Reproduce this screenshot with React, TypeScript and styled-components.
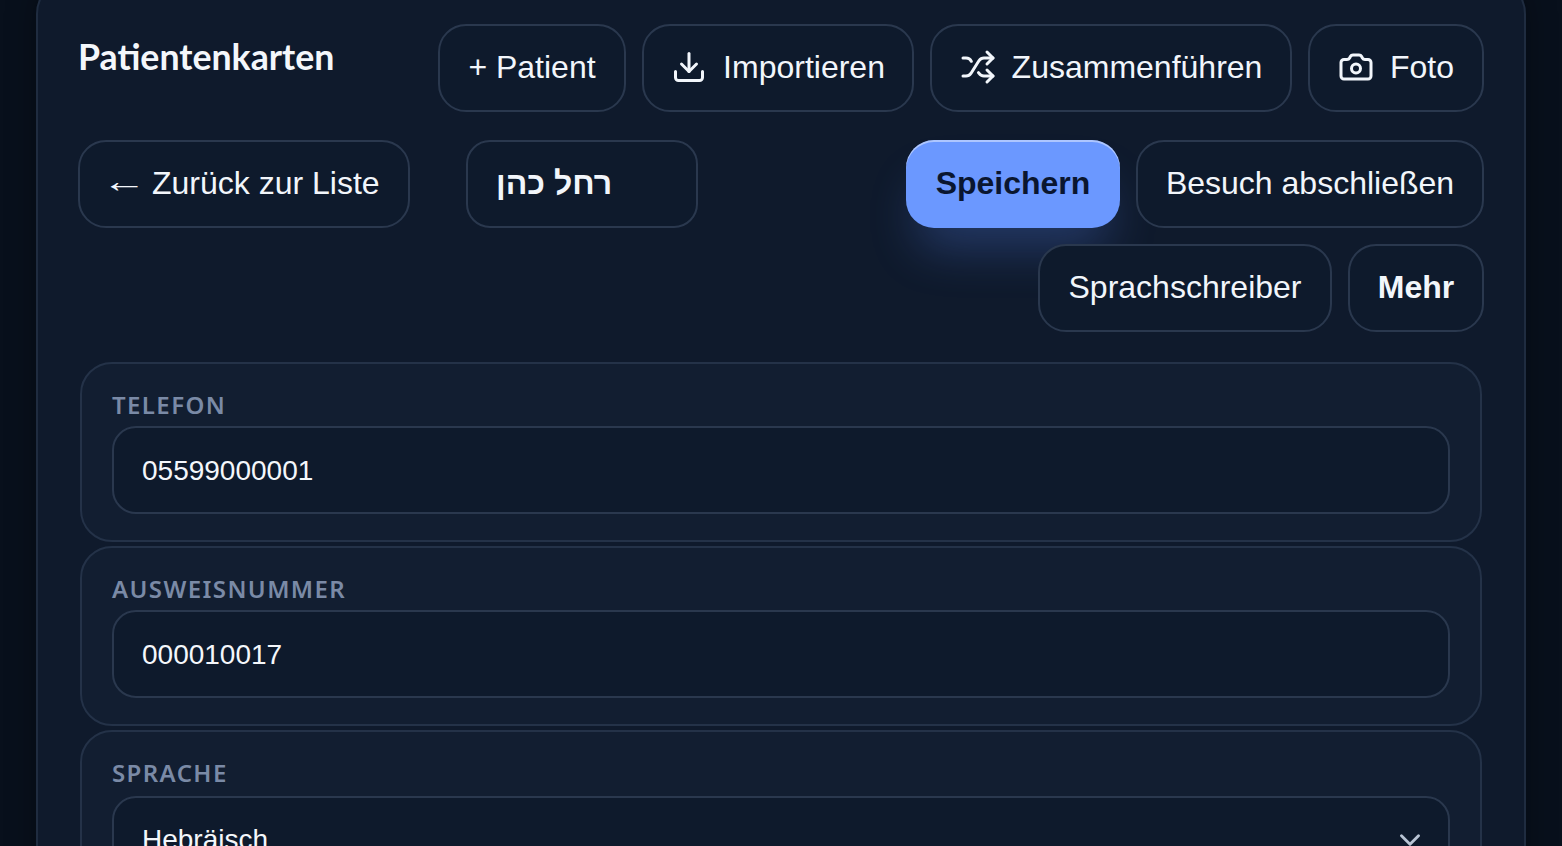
import styled, { createGlobalStyle } from "styled-components";
import { Camera, ChevronDown, Download, Shuffle } from "lucide-react";

const GlobalStyle = createGlobalStyle`
  html, body {
    margin: 0;
    height: 846px;
    overflow: hidden;
    background: #08101c;
  }
  * {
    box-sizing: border-box;
  }
`;

const Page = styled.div`
  height: 846px;
  overflow: hidden;
  padding: 0 36px;
  background: #08101c;
  font-family: "Liberation Sans", Arial, sans-serif;
`;

const Panel = styled.div`
  margin-top: -22px;
  min-height: 1200px;
  padding: 44px 40px 40px;
  background: #0f1a2c;
  border: 2px solid #1f2c40;
  border-radius: 36px;
  box-shadow: 0 0 30px rgba(0, 0, 0, 0.35);
`;

const TopRow = styled.div`
  display: flex;
  justify-content: space-between;
  align-items: flex-start;
`;

const Title = styled.h2`
  margin: 11px 0 0 0;
  font-family: Lato, sans-serif;
  font-size: 35.7px;
  line-height: 44px;
  font-weight: 700;
  color: #f4f7fb;
`;

const Actions = styled.div`
  display: flex;
  gap: 16px;
`;

const Button = styled.button<{ $bold?: boolean; $width?: number }>`
  display: inline-flex;
  align-items: center;
  justify-content: center;
  gap: 16px;
  width: ${(p) => (p.$width ? `${p.$width}px` : "auto")};
  height: 88px;
  padding: 0 28px 2px;
  background: #0e1a2c;
  border: 2px solid #2a384e;
  border-radius: 28px;
  font-family: "Liberation Sans", Arial, sans-serif;
  font-size: 32px;
  font-weight: ${(p) => (p.$bold ? 700 : 400)};
  color: #f2f6fb;
  white-space: nowrap;

  svg {
    flex: none;
  }
`;

const PrimaryButton = styled(Button)`
  background: #6b98ff;
  border: none;
  color: #0a1630;
  font-weight: 700;
  box-shadow: inset 0 2px 0 rgba(255, 255, 255, 0.45),
    0 32px 48px -12px rgba(86, 130, 240, 0.3);
`;

const BackButton = styled(Button)`
  justify-content: flex-start;
  gap: 12px;
`;

const BackArrow = styled.span`
  display: inline-block;
  width: 32px;
  transform: translateY(-2px) scaleX(1.4);
`;

const SecondRow = styled.div`
  display: flex;
  justify-content: space-between;
  align-items: flex-start;
  margin-top: 28px;
`;

const LeftGroup = styled.div`
  display: flex;
  gap: 56px;
`;

const NameBox = styled.div`
  display: flex;
  align-items: center;
  width: 232px;
  height: 88px;
  padding: 0 28px 2px;
  background: #0e1a2c;
  border: 2px solid #2a384e;
  border-radius: 24px;
  font-size: 32px;
  font-weight: 700;
  color: #f2f6fb;
`;

const RightGroup = styled.div`
  display: flex;
  flex-wrap: wrap;
  justify-content: flex-end;
  gap: 16px;
  width: 600px;
`;

const Sections = styled.div`
  display: flex;
  flex-direction: column;
  gap: 4px;
  margin: 30px 2px 0;
`;

const Section = styled.section`
  padding: 24px 30px 26px;
  background: #121e31;
  border: 2px solid #243248;
  border-radius: 32px;
`;

const Label = styled.label<{ $gap?: number }>`
  display: block;
  margin-bottom: ${(p) => p.$gap ?? 4}px;
  font-family: "Noto Sans", sans-serif;
  font-size: 24px;
  line-height: 34px;
  font-weight: 600;
  letter-spacing: 1.4px;
  text-transform: uppercase;
  color: #7a8aa6;
`;

const Input = styled.input`
  display: block;
  width: 100%;
  height: 88px;
  padding: 2px 28px 0;
  background: #0e1a2c;
  border: 2px solid #2a384e;
  border-radius: 24px;
  outline: none;
  font-family: "Liberation Sans", Arial, sans-serif;
  font-size: 28px;
  color: #f4f7fb;
`;

const Select = styled.div`
  display: flex;
  align-items: center;
  justify-content: space-between;
  height: 88px;
  padding: 0 21px 0 28px;
  background: #0e1a2c;
  border: 2px solid #2a384e;
  border-radius: 24px;
  font-size: 28px;
  color: #f4f7fb;

  svg {
    color: #b8c4d4;
  }
`;

export default function App() {
  return (
    <>
      <GlobalStyle />
      <Page>
        <Panel>
          <TopRow>
            <Title>Patientenkarten</Title>
            <Actions>
              <Button $width={188}>+ Patient</Button>
              <Button $width={272}>
                <Download size={36} />
                Importieren
              </Button>
              <Button $width={362}>
                <Shuffle size={36} />
                Zusammenführen
              </Button>
              <Button $width={176}>
                <Camera size={36} />
                Foto
              </Button>
            </Actions>
          </TopRow>
          <SecondRow>
            <LeftGroup>
              <BackButton $width={332}>
                <BackArrow>←</BackArrow>
                Zurück zur Liste
              </BackButton>
              <NameBox>רחל כהן</NameBox>
            </LeftGroup>
            <RightGroup>
              <PrimaryButton $width={214}>Speichern</PrimaryButton>
              <Button $width={348}>Besuch abschließen</Button>
              <Button $width={294}>Sprachschreiber</Button>
              <Button $bold $width={136}>Mehr</Button>
            </RightGroup>
          </SecondRow>
          <Sections>
            <Section>
              <Label>Telefon</Label>
              <Input readOnly value="05599000001" />
            </Section>
            <Section>
              <Label>Ausweisnummer</Label>
              <Input readOnly value="000010017" />
            </Section>
            <Section>
              <Label $gap={6}>Sprache</Label>
              <Select>
                Hebräisch
                <ChevronDown size={34} />
              </Select>
            </Section>
          </Sections>
        </Panel>
      </Page>
    </>
  );
}
